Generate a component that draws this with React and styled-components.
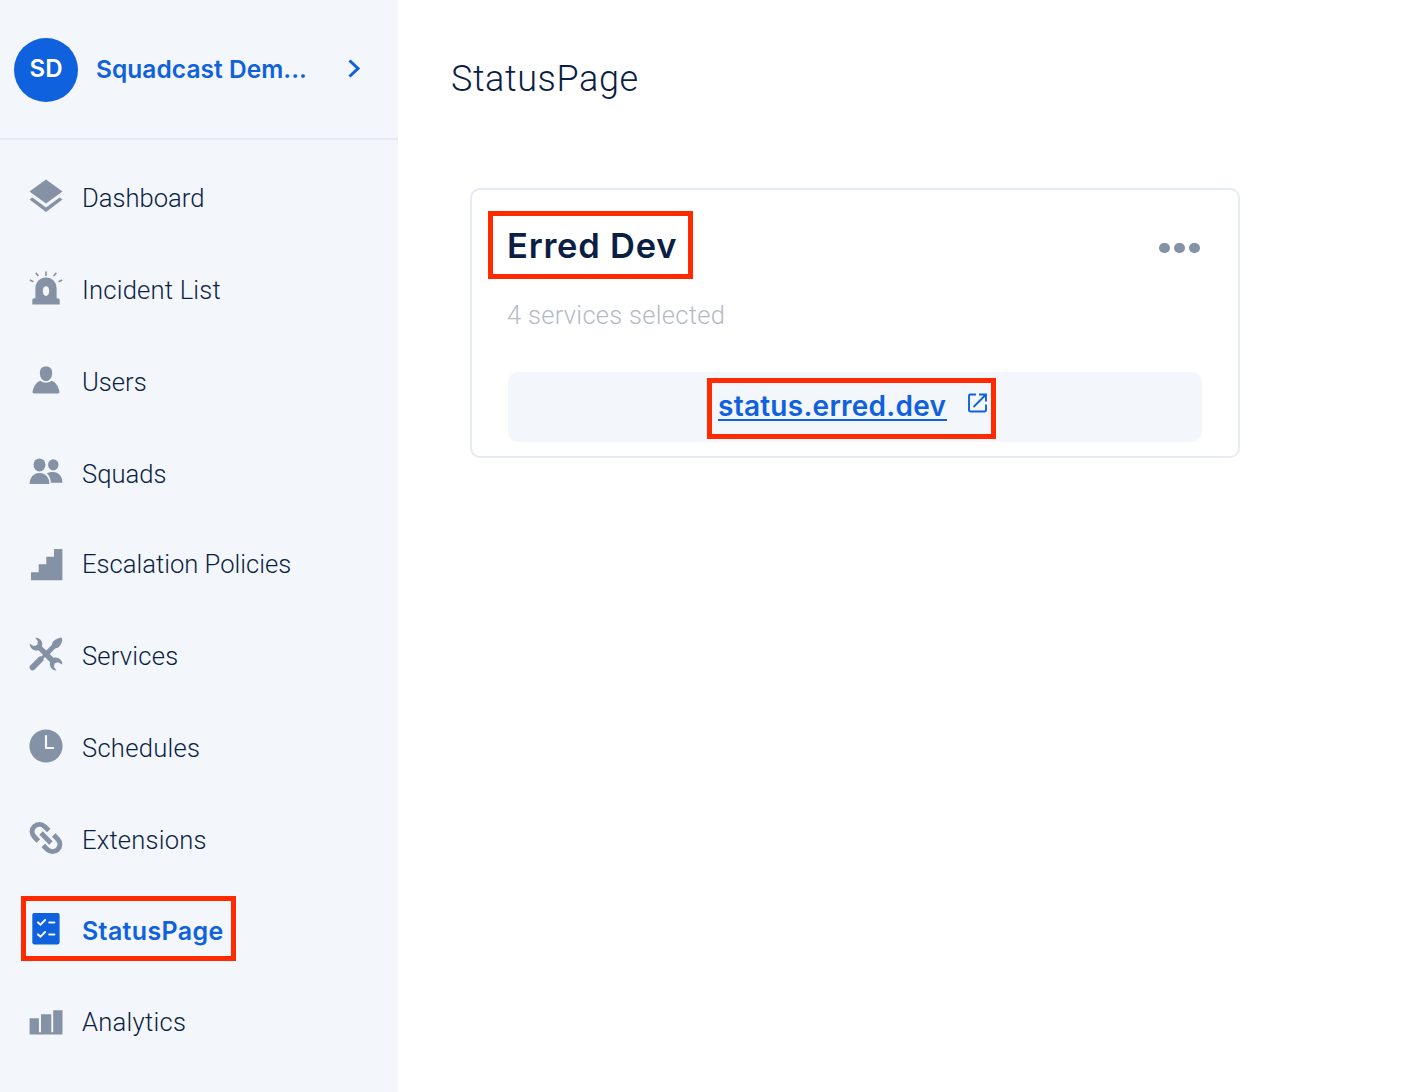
import React from "react";
import styled, { createGlobalStyle, css } from "styled-components";

const c = {
  blue: "#0f61dd",
  navy: "#0b1f45",
  grey: "#8591a5",
  panel: "#f3f6fb",
  line: "#e6eaf4",
  red: "#ff2a00",
  muted: "#b5bac6",
};

const GlobalStyle = createGlobalStyle`
  * { box-sizing: border-box; }
  body { margin: 0; background: #fff; color: ${c.navy}; font-family: Roboto, Inter, sans-serif; font-weight: 300; }
  h1, h2, p, ul { margin: 0; padding: 0; }
`;

const Page = styled.div`
  display: flex;
  height: 1092px;
  overflow: hidden;
`;

const Sidebar = styled.aside`
  flex: 0 0 398px;
  background: ${c.panel};
`;

const Account = styled.header`
  display: flex;
  align-items: center;
  height: 140px;
  padding: 0 36px 0 14px;
  border-bottom: 2px solid ${c.line};
`;

const Avatar = styled.div`
  display: grid;
  place-items: center;
  width: 64px;
  height: 64px;
  margin: 1px 18px 0 0;
  border-radius: 50%;
  background: ${c.blue};
  color: #fff;
  font: 600 24px/62px Inter, sans-serif;
  padding-bottom: 2px;
`;

const AccountName = styled.span`
  flex: 1;
  white-space: nowrap;
  color: ${c.blue};
  font: 600 24.5px/32px Inter, sans-serif;
  letter-spacing: 0.05px;
`;

const Nav = styled.ul`
  list-style: none;
  padding-top: 39px;
`;

const NavItem = styled.li`
  position: relative;
  display: flex;
  align-items: flex-start;
  gap: 19px;
  height: ${(p) => (p.$short ? 90 : 92)}px;
  padding-left: 29px;
  color: ${(p) => (p.$active ? c.blue : c.grey)};
`;

const NavIcon = styled.svg`
  flex: none;
  width: 34px;
  height: 34px;
  overflow: visible;
`;

const NavLabel = styled.span`
  color: ${c.navy};
  font-size: 25.6px;
  line-height: 38px;
  letter-spacing: ${(p) => p.$tracking || 0}px;
  white-space: nowrap;
  ${(p) => p.$active && css`
    color: ${c.blue};
    font: 600 25px/36px Inter, sans-serif;
  `}
`;

const Highlight = styled.span`
  position: absolute;
  border: 5px solid ${c.red};
  top: ${(p) => p.$top}px;
  left: ${(p) => p.$left}px;
  width: ${(p) => p.$w}px;
  height: ${(p) => p.$h}px;
  pointer-events: none;
`;

const Main = styled.main`
  flex: 1;
  padding: 57px 0 0 53px;
`;

const Title = styled.h1`
  font-size: 36px;
  line-height: 44px;
  font-weight: 300;
  letter-spacing: 0.6px;
`;

const Card = styled.section`
  width: 770px;
  height: 270px;
  margin: 87px 0 0 19px;
  padding: 34px 36px 0;
  border: 2px solid ${c.line};
  border-radius: 10px;
`;

const CardHeader = styled.div`
  position: relative;
  display: flex;
  justify-content: space-between;
  align-items: center;
  height: 44px;
`;

const CardTitle = styled.h2`
  font: 600 34.5px/44px Inter, sans-serif;
  letter-spacing: 0.75px;
  margin-left: -1px;
`;

const MoreDots = styled.div`
  display: flex;
  gap: 4.500px;
  padding: 4px 2.300px 0 0;
`;

const Dot = styled.i`
  width: 10.6px;
  height: 10.6px;
  border-radius: 50%;
  background: ${c.grey};
`;

const Subtitle = styled.p`
  margin: 30px 0 40px -1px;
  color: ${c.muted};
  font-size: 25.5px;
  line-height: 34px;
  letter-spacing: 0.3px;
`;

const LinkBar = styled.div`
  position: relative;
  display: flex;
  gap: 20px;
  height: 70px;
  padding: 17px 0 0 210px;
  border-radius: 10px;
  background: ${c.panel};
  color: ${c.blue};
`;

const StatusLink = styled.a`
  height: 32px;
  border-bottom: 2px solid ${c.blue};
  font: 600 28px/34px Inter, sans-serif;
  letter-spacing: 0.25px;
  white-space: nowrap;
  width: 229px;
`;

const OpenIcon = styled.svg`
  width: 20px;
  height: 20px;
  margin-top: 4px;
`;

const icons = {
  layers: (
    <g fill="currentColor">
      <path d="M17 .5 33.5 12.4 17 24.5.5 12.4Z" />
      <path d="m.5 20.6 2.9-2.2L17 28.5l13.6-10.1 2.9 2.2L17 33Z" />
    </g>
  ),
  siren: (
    <>
      <path fill="currentColor" fillRule="evenodd" d="M6.4 27.2V17a10.6 10.6 0 0 1 21.2 0v10.2h1.3q1.8 0 1.8 2v4.3H3.3v-4.3q0-2 1.8-2ZM17 15.2c-2 0-3.2 1.8-3.2 4.9S15 25 17 25s3.2-1.8 3.2-4.9-1.2-4.9-3.2-4.9Z" />
      <path fill="none" stroke="currentColor" strokeWidth="1.6" d="M17 .6v4.4M6.7 1.9 9.4 5M27.3 1.9 24.6 5M.8 9l3.6 1.7M33.2 9l-3.6 1.7" />
    </>
  ),
  user: (
    <g fill="currentColor">
      <path d="M17 3.6c4.3 0 6.1 2.4 6.1 6.4 0 4.7-2.6 8.1-6.1 8.1S10.9 14.7 10.9 10c0-4 1.8-6.4 6.1-6.400Z" />
      <path d="M11.200 17.700c3.200 2.500 8.400 2.500 11.600 0 4.200 1.500 6.400 5.600 7.500 10.300.5 1.700.1 2.400-1.400 2.400H5.100c-1.500 0-1.900-.7-1.400-2.400 1.100-4.700 3.300-8.800 7.500-10.300Z" />
    </g>
  ),
  users: (
    <g fill="currentColor">
      <ellipse cx="10.5" cy="9.9" rx="6" ry="6.5" />
      <ellipse cx="24.3" cy="9.8" rx="5.2" ry="5.6" />
      <path d="M.6 29c0-6.500 4-11 9.900-11s9.900 4.500 9.900 11Z" />
      <path d="M17.800 18.300c1.800-.9 3.800-1.400 6.300-1.400 5.500 0 9.300 4.200 9.300 10.900H21.900c-.3-4.300-1.700-7.200-4.100-9.500Z" />
    </g>
  ),
  stairs: <path fill="currentColor" d="M2 35.300v-8h7.700v-8h7.600v-7.600H25V4h8.400v31.300Z" />,
  tools: (
    <>
      <path fill="currentColor" d="M6.200.7C10.200.4 13.600 3.400 13.200 7.600L13 9.500 24.500 20.800c4.600-1 8.900 2 8.900 6.700l-4.600-2.300-3.300 1.300-.5 3.600 2.500 3.300c-4.800.2-7.600-4-6.400-8.100L9.500 13.300C5 14.400.9 11.400.6 6.700L4.700 9 8.200 7.900 8.900 4.300Z" />
      <path fill="currentColor" d="M30.200.9Q33-.2 33.400 3q-.8 4.800-4 7.600l-3.200.9-7.200 7.200-3.500-3.400 7.300-7.300 1-3.200Q26.200 1.900 30.200.9Z" />
      <path fill="none" stroke="currentColor" strokeWidth="6" strokeLinecap="round" d="m3.600 30.300 7.800-7.800" />
      <path fill="none" stroke="currentColor" strokeWidth="3" d="m11 23 7-7" />
    </>
  ),
  clock: (
    <>
      <circle cx="17" cy="17" r="16.600" fill="currentColor" />
      <path fill="none" stroke={c.panel} strokeWidth="2.200" strokeLinecap="round" strokeLinejoin="round" d="M17 7v12h7.200" />
    </>
  ),
  link: (
    <path fill="none" stroke="currentColor" strokeWidth="4.900" strokeLinejoin="round" d="m19.800 9.600-4.200-4.100A7.300 7.300 0 0 0 5.200 15.800l4.100 4.200M14.200 24.400l4.200 4.100A7.300 7.300 0 0 0 28.800 18.200l-4.100-4.200M12.100 12.100l9.800 9.800" />
  ),
  checklist: (
    <>
      <rect x="3.300" width="27.300" height="31.400" rx="1.800" fill="currentColor" />
      <path fill="none" stroke={c.panel} strokeWidth="2" strokeLinecap="round" d="m9 9.400 2.500 2.300 4.600-4.700M20.200 9.400H25.400M9 21.400l2.500 2.300 4.600-4.700M20.200 21.400H25.400" />
    </>
  ),
  bars: <path fill="currentColor" d="M.6 31.400V15.200h9.300v14H12V11.300h10.300v17.900h1.900V7.200h9.300v24.200Z" />,
};

const menu = [
  { label: "Dashboard", icon: "layers" },
  { label: "Incident List", icon: "siren", tracking: 0.2 },
  { label: "Users", icon: "user" },
  { label: "Squads", icon: "users", short: true },
  { label: "Escalation Policies", icon: "stairs" },
  { label: "Services", icon: "tools", tracking: 0.2 },
  { label: "Schedules", icon: "clock", tracking: 0.25 },
  { label: "Extensions", icon: "link", tracking: 0.2 },
  { label: "StatusPage", icon: "checklist", active: true, short: true, tracking: 0.35 },
  { label: "Analytics", icon: "bars", tracking: 0.25 },
];

export default function App() {
  return (
    <Page>
      <GlobalStyle />
      <Sidebar>
        <Account>
          <Avatar>SD</Avatar>
          <AccountName>Squadcast Dem...</AccountName>
          <svg width="14" height="20" viewBox="0 0 14 20" fill="none" stroke={c.blue} strokeWidth="3">
            <path d="m1.500 1.500 8.500 8-8.500 8" />
          </svg>
        </Account>
        <Nav>
          {menu.map((m) => (
            <NavItem key={m.label} $active={m.active} $short={m.short}>
              <NavIcon viewBox="0 0 34 34">{icons[m.icon]}</NavIcon>
              <NavLabel $active={m.active} $tracking={m.tracking}>{m.label}</NavLabel>
              {m.active && <Highlight $top={-17} $left={21} $w={215} $h={65} />}
            </NavItem>
          ))}
        </Nav>
      </Sidebar>
      <Main>
        <Title>StatusPage</Title>
        <Card>
          <CardHeader>
            <CardTitle>Erred Dev</CardTitle>
            <MoreDots><Dot /><Dot /><Dot /></MoreDots>
            <Highlight $top={-13} $left={-20} $w={205} $h={68} />
          </CardHeader>
          <Subtitle>4 services selected</Subtitle>
          <LinkBar>
            <StatusLink>status.erred.dev</StatusLink>
            <OpenIcon viewBox="0 0 20 20" fill="none" stroke="currentColor" strokeWidth="1.900">
              <path d="M9 1.500H3.200Q2 1.500 2 2.700v14.600Q2 18.500 3.200 18.500h14.600q1.200 0 1.200-1.200V11.500M12 1.500h7v7M18.500 2 6.500 14" />
            </OpenIcon>
            <Highlight $top={6} $left={199} $w={289} $h={61} />
          </LinkBar>
        </Card>
      </Main>
    </Page>
  );
}
